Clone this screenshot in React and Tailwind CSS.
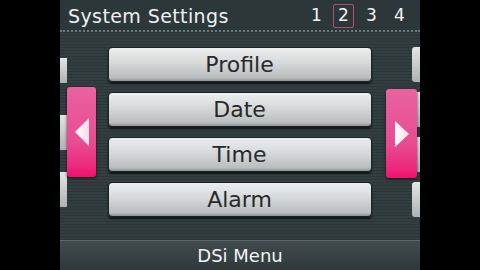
import React from "react";

const menuItems = ["Profile", "Date", "Time", "Alarm"];

function MenuButton({ label }) {
    return (
        <button
            type="button"
            className="flex h-[35px] w-[264px] items-center justify-center rounded-[4px] border border-[#1c2325] bg-[linear-gradient(180deg,#eceeee_0%,#d6d9d9_45%,#b9bdbe_90%,#8e9394_100%)] text-[22px] leading-none text-[#262a2b] shadow-[0_2px_2px_rgba(0,0,0,0.6)]"
            style={{ fontFamily: "'DejaVu Sans', sans-serif" }}
        >
            {label}
        </button>
    );
}

function SideTile({ className }) {
    return (
        <div
            className={`bg-[linear-gradient(180deg,#e4e6e6,#aeb2b3)] ${className}`}
        />
    );
}

function ArrowTab({ direction }) {
    const left = direction === "left";
    return (
        <div
            className={`absolute flex items-center justify-center rounded-[3px] bg-[linear-gradient(180deg,#e9629f_0%,#e84d92_60%,#ec2a7c_88%,#f0106c_100%)] shadow-[0_1px_3px_rgba(0,0,0,0.7)] ${
                left ? "left-[7px] top-[55px] h-[90px] w-[29px]" : "left-[326px] top-[57px] h-[89px] w-[31px]"
            }`}
        >
            <svg width="16" height="30" viewBox="0 0 16 30">
                <defs>
                    <linearGradient id={`tri-${direction}`} x1="0" y1="0" x2="1" y2="0">
                        <stop offset="0" stopColor="#ffffff" />
                        <stop offset="1" stopColor="#f4dbe6" />
                    </linearGradient>
                </defs>
                {left ? (
                    <polygon points="1,15 15,1 15,29" fill={`url(#tri-${direction})`} />
                ) : (
                    <polygon points="1,2 15,15 1,28" fill={`url(#tri-${direction})`} />
                )}
            </svg>
        </div>
    );
}

export default function App() {
    return (
        <main className="flex h-[270px] w-[480px] justify-center overflow-hidden bg-black">
            <div
                className="flex h-full w-[360px] flex-col bg-[repeating-linear-gradient(180deg,#323e40_0px,#323e40_2px,#29343600_2px,#293436_3px)] bg-[#2c3739]"
                style={{ fontFamily: "'DejaVu Sans', sans-serif" }}
            >
                {/* header */}
                <div className="flex h-[32px] items-center justify-between border-b-2 border-dotted border-[#6f7a7c] bg-[#2c3739] pl-[8px] pr-[14px] pt-[1px]">
                    <span className="pt-[2px] text-[19px] tracking-[0.4px] text-[#eef0f0]">System Settings</span>
                    <div className="flex items-center text-[17px] text-[#f2f4f4]">
                        <span className="mr-[10px] w-[13px] text-center">1</span>
                        <span className="flex h-[24px] w-[21px] items-center justify-center rounded-[2px] border-[1.5px] border-[#b64a78]">2</span>
                        <span className="ml-[11px] w-[13px] text-center">3</span>
                        <span className="ml-[15px] w-[13px] text-center">4</span>
                    </div>
                </div>

                {/* page area */}
                <div className="relative flex flex-1">
                    <div className="relative w-[7px]">
                        <SideTile className="absolute left-0 top-[26px] h-[25px] w-[7px]" />
                        <SideTile className="absolute left-0 top-[83px] h-[35px] w-[7px]" />
                        <SideTile className="absolute left-0 top-[140px] h-[35px] w-[7px]" />
                    </div>
                    <div className="flex flex-1 flex-col items-center gap-[10px] pt-[15px]">
                        {menuItems.map((item) => (
                            <MenuButton key={item} label={item} />
                        ))}
                    </div>
                    <div className="flex w-[8px] flex-col gap-[10px] pt-[15px]">
                        {menuItems.map((item) => (
                            <SideTile key={item} className="h-[35px] w-[8px] rounded-l-[3px]" />
                        ))}
                    </div>
                    <ArrowTab direction="left" />
                    <ArrowTab direction="right" />
                </div>

                {/* bottom bar */}
                <div className="flex h-[30px] items-center justify-center border-t border-[#5d686a] bg-[linear-gradient(180deg,#424c4e,#2f393b)] text-[18px] text-[#f2f4f4]">
                    DSi Menu
                </div>
            </div>
        </main>
    );
}
